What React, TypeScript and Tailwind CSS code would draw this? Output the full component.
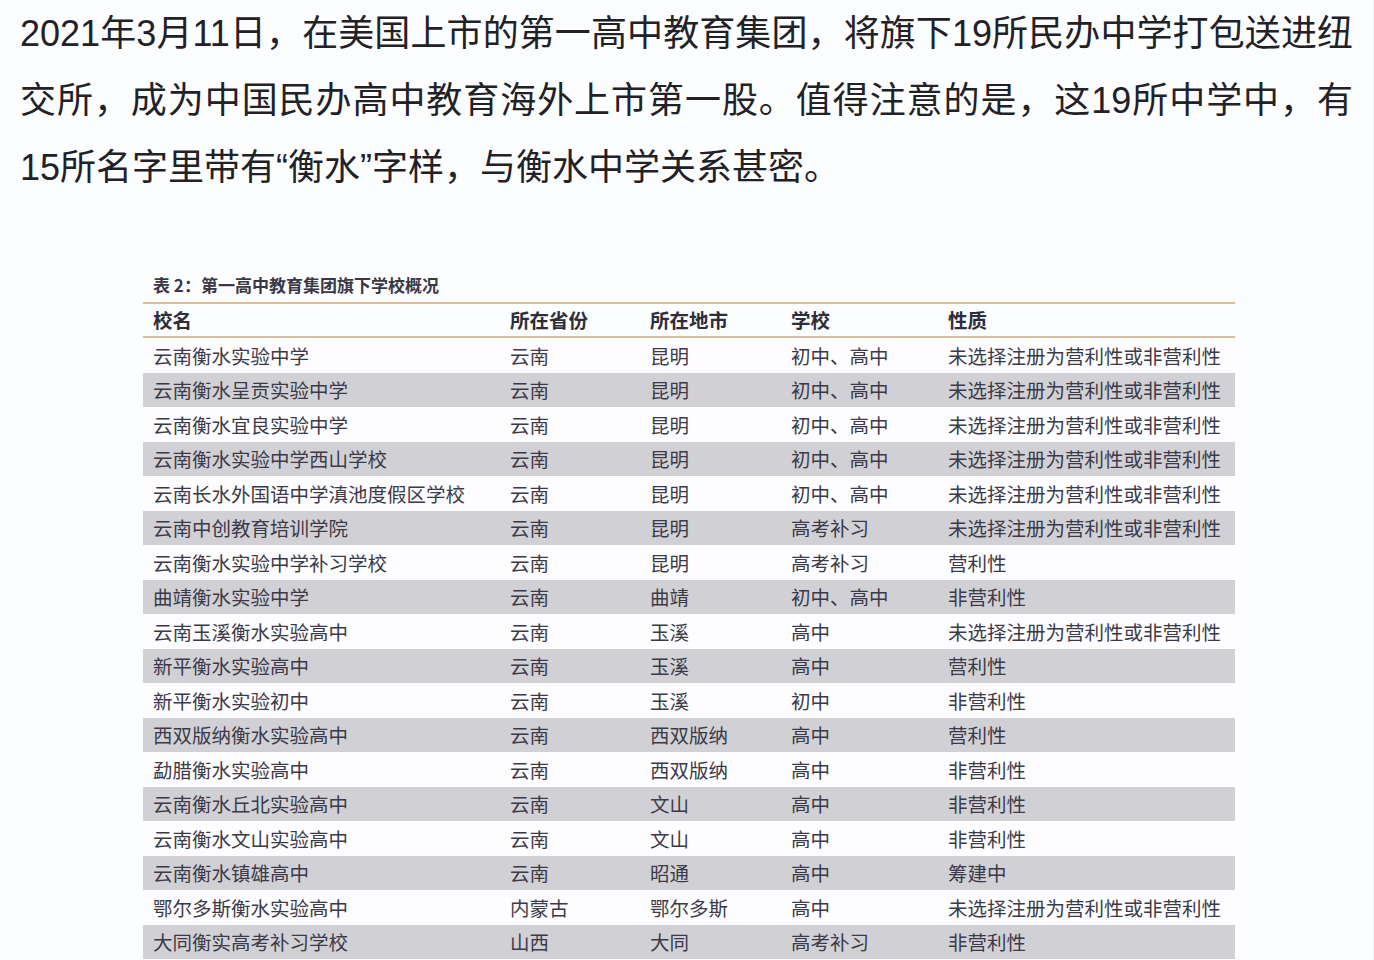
import React from 'react';

const rows: string[][] = [
  ['云南衡水实验中学', '云南', '昆明', '初中、高中', '未选择注册为营利性或非营利性'],
  ['云南衡水呈贡实验中学', '云南', '昆明', '初中、高中', '未选择注册为营利性或非营利性'],
  ['云南衡水宜良实验中学', '云南', '昆明', '初中、高中', '未选择注册为营利性或非营利性'],
  ['云南衡水实验中学西山学校', '云南', '昆明', '初中、高中', '未选择注册为营利性或非营利性'],
  ['云南长水外国语中学滇池度假区学校', '云南', '昆明', '初中、高中', '未选择注册为营利性或非营利性'],
  ['云南中创教育培训学院', '云南', '昆明', '高考补习', '未选择注册为营利性或非营利性'],
  ['云南衡水实验中学补习学校', '云南', '昆明', '高考补习', '营利性'],
  ['曲靖衡水实验中学', '云南', '曲靖', '初中、高中', '非营利性'],
  ['云南玉溪衡水实验高中', '云南', '玉溪', '高中', '未选择注册为营利性或非营利性'],
  ['新平衡水实验高中', '云南', '玉溪', '高中', '营利性'],
  ['新平衡水实验初中', '云南', '玉溪', '初中', '非营利性'],
  ['西双版纳衡水实验高中', '云南', '西双版纳', '高中', '营利性'],
  ['勐腊衡水实验高中', '云南', '西双版纳', '高中', '非营利性'],
  ['云南衡水丘北实验高中', '云南', '文山', '高中', '非营利性'],
  ['云南衡水文山实验高中', '云南', '文山', '高中', '非营利性'],
  ['云南衡水镇雄高中', '云南', '昭通', '高中', '筹建中'],
  ['鄂尔多斯衡水实验高中', '内蒙古', '鄂尔多斯', '高中', '未选择注册为营利性或非营利性'],
  ['大同衡实高考补习学校', '山西', '大同', '高考补习', '非营利性'],
];

const headers = ['校名', '所在省份', '所在地市', '学校', '性质'];
const colWidths = ['w-[357px]', 'w-[140px]', 'w-[141px]', 'w-[157px]', 'flex-1'];

export default function App() {
  return (
    <div className="min-h-screen bg-[#fcfdff] font-['Noto_Sans_CJK_SC','Noto_Sans',sans-serif] overflow-hidden border-r border-[#eef0f4]">
      {/* article paragraph, latin glyphs from an Arial-width face like the original */}
      <p className="px-5 text-[36px] leading-[67px] text-[#222126] text-justify font-['Liberation_Sans','Noto_Sans_CJK_SC',sans-serif]">
        2021年3月11日，在美国上市的第一高中教育集团，将旗下19所民办中学打包送进纽交所，成为中国民办高中教育海外上市第一股。值得注意的是，这19所中学中，有15所名字里带有“衡水”字样，与衡水中学关系甚密。
      </p>

      <div className="ml-[143px] w-[1092px] mt-[72px] text-[#3c3a48]">
        <div className="pl-[10px] text-[17px] leading-[24px] font-bold text-[#3a3846] mb-[5px]">
          表 2：第一高中教育集团旗下学校概况
        </div>
        <div className="border-t-2 border-b-2 border-[#d9bc98] flex h-[36px] items-center">
          {headers.map((h, i) => (
            <div key={h} className={`${colWidths[i]} pl-[10px] text-[19.5px] font-bold text-[#2f2d3a]`}>
              {h}
            </div>
          ))}
        </div>
        {rows.map((r, idx) => (
          <div
            key={r[0]}
            className={`flex h-[34.5px] items-center text-[19.5px] ${idx % 2 === 1 ? 'bg-[#d1d1d5]' : 'bg-[#fdfdff]'}`}
          >
            {r.map((c, i) => (
              <div key={i} className={`${colWidths[i]} pl-[10px] whitespace-nowrap`}>
                {c}
              </div>
            ))}
          </div>
        ))}
      </div>
    </div>
  );
}
